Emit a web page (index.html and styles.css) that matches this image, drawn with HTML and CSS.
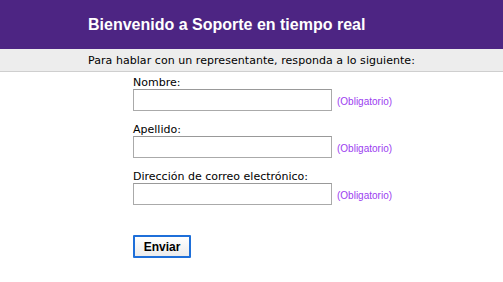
FILE: index.html
```html
<!DOCTYPE html>
<html lang="es">
<head>
<meta charset="utf-8">
<title>Soporte en tiempo real</title>
<link rel="stylesheet" href="styles.css">
</head>
<body>
<header class="banner">
  <h1 class="banner-title">Bienvenido a Soporte en tiempo real</h1>
</header>
<div class="intro">Para hablar con un representante, responda a lo siguiente:</div>
<form class="form">
  <div class="field">
    <label class="label" for="n">Nombre:</label>
    <div class="row"><input class="input" id="n" type="text"><span class="req">(Obligatorio)</span></div>
  </div>
  <div class="field">
    <label class="label" for="a">Apellido:</label>
    <div class="row"><input class="input" id="a" type="text"><span class="req">(Obligatorio)</span></div>
  </div>
  <div class="field">
    <label class="label" for="e">Dirección de correo electrónico:</label>
    <div class="row"><input class="input" id="e" type="text"><span class="req">(Obligatorio)</span></div>
  </div>
  <button class="submit" type="button">Enviar</button>
</form>
</body>
</html>
```
FILE: styles.css
```css
html, body { margin: 0; padding: 0; background: #fff; }
body { font-family: "DejaVu Sans", Verdana, sans-serif; font-size: 11px; color: #000; }
.banner { background: #4d2583; height: 49px; display: flex; align-items: center; padding-left: 88px; box-sizing: border-box; }
.banner-title { margin: 0; font-family: "Liberation Sans", Arial, sans-serif; font-weight: bold; font-size: 16px; color: #fff; }
.intro { background: #ededed; height: 22px; border-bottom: 1px solid #cfcfcf; display: flex; align-items: center; justify-content: center; font-size: 11px; letter-spacing: 0.05px; }
.form { margin: 4px 0 0 133px; display: flex; flex-direction: column; align-items: flex-start; }
.field { display: flex; flex-direction: column; margin-bottom: 12px; }
.label { line-height: 13px; margin-bottom: 0; }
.row { display: flex; align-items: flex-end; gap: 5px; }
.input { width: 199px; height: 22px; box-sizing: border-box; border: 1px solid #aaa; border-top-color: #999; margin: 0; padding: 2px; background: #fff; }
.req { font-family: "Liberation Sans", Arial, sans-serif; font-size: 10px; color: #9b3df0; line-height: 12px; margin-bottom: 3px; }
.submit { margin-top: 18px; width: 58px; height: 23px; box-sizing: border-box; border: 2px solid #1e6fd9; background: linear-gradient(#ffffff, #ececec); font-family: "Liberation Sans", Arial, sans-serif; font-weight: bold; font-size: 12px; color: #000; padding: 0; border-radius: 1px; }
```
